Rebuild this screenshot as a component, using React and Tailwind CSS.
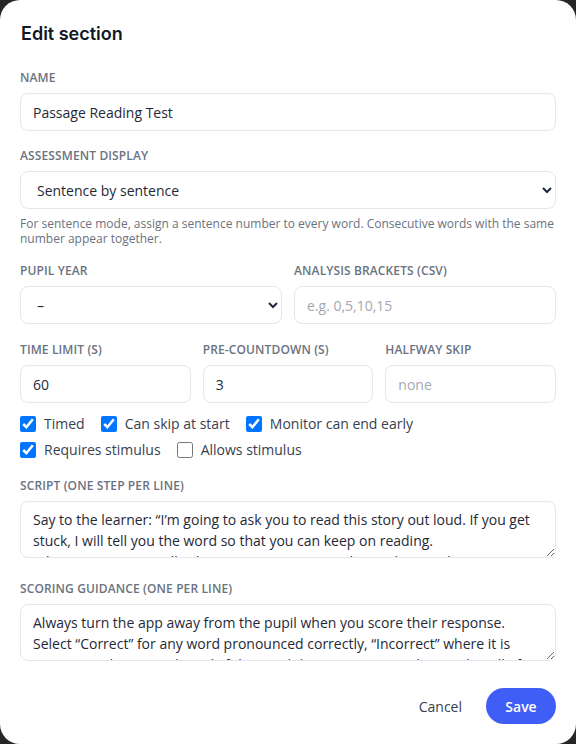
import React from "react";

const font = { fontFamily: '"Open Sans", "Noto Sans", sans-serif' };

function Label({ children, className = "" }) {
  return (
    <div className={"text-[12px] leading-4 font-semibold uppercase tracking-[0.01em] text-[#6b7280] mb-[7px] " + className}>
      {children}
    </div>
  );
}

const inputCls =
  "block w-full h-[38px] rounded-[8px] border border-[#e5e7eb] bg-white px-3 text-[14px] text-[#1f2937] placeholder:text-[#a3a9b3] outline-none";

const selectCls =
  "block w-full h-[38px] rounded-[8px] border border-[#e5e7eb] bg-white pl-3 pr-1 text-[14px] text-[#1f2937] outline-none";

const textareaCls =
  "block w-full h-[57px] rounded-[8px] border border-[#e5e7eb] bg-white px-3 pt-[7px] text-[14px] leading-[21px] text-[#1f2937] outline-none overflow-hidden resize-y";

function Check({ checked, label }) {
  return (
    <label className="flex items-center gap-[8px] text-[14px] leading-5 text-[#374151]">
      <input type="checkbox" defaultChecked={checked} className="w-4 h-4 m-0 accent-[#0075ff]" />
      <span>{label}</span>
    </label>
  );
}

export default function App() {
  const script =
    "Say to the learner: \u201CI\u2019m going to ask you to read this story out loud. If you get stuck, I will tell you the word so that you can keep on reading.\nWhen I say \u2018Stop\u2019, I will ask you some questions about what you have just read.\u201D";
  const scoring =
    "Always turn the app away from the pupil when you score their response.\nSelect \u201CCorrect\u201D for any word pronounced correctly, \u201CIncorrect\u201D where it is pronounced incorrectly and, if the pupil does not attempt the word at all after 3 seconds, select \u201CNo response\u201D.";
  return (
    <div className="w-[576px] h-[744px] bg-[#262626]" style={font}>
      <div className="h-full bg-white rounded-[20px] px-5 pt-5 pb-5 flex flex-col">
        <h2
          className="text-[18px] leading-7 font-semibold text-[#111827] pl-px"
          style={{ fontFamily: 'Inter, "Open Sans", sans-serif' }}
        >
          Edit section
        </h2>

        <div className="mt-[22px]">
          <Label>Name</Label>
          <input className={inputCls} defaultValue="Passage Reading Test" />
        </div>

        <div className="mt-[17px]">
          <Label>Assessment display</Label>
          <select className={selectCls} defaultValue="sentence">
            <option value="sentence">Sentence by sentence</option>
            <option value="word">Word by word</option>
          </select>
          <p className="mt-[7px] text-[12px] leading-[15px] text-[#6b7280]">
            For sentence mode, assign a sentence number to every word. Consecutive words with the same number appear together.
          </p>
        </div>

        <div className="mt-[17px] grid grid-cols-2 gap-3">
          <div>
            <Label>Pupil year</Label>
            <select className={selectCls} defaultValue="">
              <option value="">–</option>
              <option value="1">Year 1</option>
            </select>
          </div>
          <div>
            <Label>Analysis brackets (CSV)</Label>
            <input className={inputCls} placeholder="e.g. 0,5,10,15" />
          </div>
        </div>

        <div className="mt-[18px] grid grid-cols-3 gap-3">
          <div>
            <Label>Time limit (s)</Label>
            <input className={inputCls} defaultValue="60" />
          </div>
          <div>
            <Label>Pre-countdown (s)</Label>
            <input className={inputCls} defaultValue="3" />
          </div>
          <div>
            <Label>Halfway skip</Label>
            <input className={inputCls} placeholder="none" />
          </div>
        </div>

        <div className="mt-[11px] flex flex-wrap gap-x-[16px] gap-y-[6px]">
          <Check checked label="Timed" />
          <Check checked label="Can skip at start" />
          <Check checked label="Monitor can end early" />
          <Check checked label="Requires stimulus" />
          <Check checked={false} label="Allows stimulus" />
        </div>

        <div className="mt-[18px]">
          <Label>Script (one step per line)</Label>
          <textarea className={textareaCls} defaultValue={script} />
        </div>

        <div className="mt-[23px]">
          <Label>Scoring guidance (one per line)</Label>
          <textarea className={textareaCls} defaultValue={scoring} />
        </div>

        <div className="mt-auto flex items-center justify-end gap-2">
          <button className="h-9 px-4 text-[14px] font-medium text-[#374151]">Cancel</button>
          <button className="h-9 w-[70px] rounded-full bg-[#3f5ef5] text-[14px] font-semibold text-white">Save</button>
        </div>
      </div>
    </div>
  );
}
